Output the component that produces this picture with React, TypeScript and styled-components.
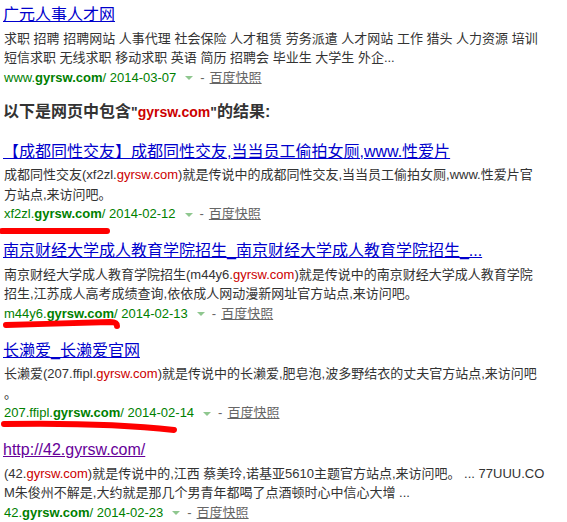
import React from "react";
import styled, { createGlobalStyle } from "styled-components";

const GlobalStyle = createGlobalStyle`
  html, body {
    margin: 0;
    padding: 0;
    background: #fff;
  }
  body {
    font-family: "Liberation Sans", Arial, "Noto Sans CJK SC", sans-serif;
  }
`;

const Page = styled.div`
  padding: 3px 0 0 3px;
`;

const ResultBlock = styled.div`
  margin-bottom: 15.5px;
`;

const Title = styled.a<{ $visited?: boolean }>`
  display: block;
  height: 24px;
  font-size: 16px;
  line-height: 24px;
  margin-bottom: 1.5px;
  white-space: nowrap;
  color: ${(p) => (p.$visited ? "#660099" : "#0000cc")};
  text-decoration: underline;
`;

const Line = styled.div`
  height: 19.5px;
  font-size: 13px;
  line-height: 19.5px;
  color: #333;
  white-space: nowrap;
  padding-left: 1px;
`;

const Em = styled.span`
  color: #cc0000;
`;

const Heading = styled.div`
  height: 20px;
  font-size: 16px;
  font-weight: bold;
  line-height: 20px;
  color: #333;
  margin: -1px 0 18px;
  white-space: nowrap;
`;

const Latin = styled.span`
  font-size: 14px;
`;

const UrlRow = styled.div`
  position: relative;
  display: flex;
  align-items: center;
  height: 19.5px;
  font-size: 13px;
  line-height: 19.5px;
  color: #008000;
  white-space: nowrap;
  padding-left: 1px;
`;

const Arrow = styled.span`
  width: 0;
  height: 0;
  margin: 2px 7px 0 9px;
  border-left: 4px solid transparent;
  border-right: 4px solid transparent;
  border-top: 4px solid #8fc78f;
`;

const Dash = styled.span`
  color: #666;
  margin-right: 5px;
`;

const Snapshot = styled.a`
  color: #666;
  text-decoration: underline;
`;

const Mark = styled.svg`
  position: absolute;
  left: -3px;
  top: 0;
  pointer-events: none;
`;

type Result = {
  title: string;
  visited?: boolean;
  lines: React.ReactNode[];
  host: string;
  date: string;
  mark?: "straight" | "hook" | "long";
};

const results: Result[] = [
  {
    title: "【成都同性交友】成都同性交友,当当员工偷拍女厕,www.性爱片",
    lines: [
      <>
        成都同性交友(xf2zl.<Em>gyrsw.com</Em>)就是传说中的成都同性交友,当当员工偷拍女厕,www.性爱片官
      </>,
      <>方站点,来访问吧。</>,
    ],
    host: "xf2zl.",
    date: "2014-02-12",
    mark: "straight",
  },
  {
    title: "南京财经大学成人教育学院招生_南京财经大学成人教育学院招生_...",
    lines: [
      <>
        南京财经大学成人教育学院招生(m44y6.<Em>gyrsw.com</Em>)就是传说中的南京财经大学成人教育学院
      </>,
      <>招生,江苏成人高考成绩查询,依依成人网动漫新网址官方站点,来访问吧。</>,
    ],
    host: "m44y6.",
    date: "2014-02-13",
    mark: "hook",
  },
  {
    title: "长濑爱_长濑爱官网",
    lines: [
      <>
        长濑爱(207.ffipl.<Em>gyrsw.com</Em>)就是传说中的长濑爱,肥皂泡,波多野结衣的丈夫官方站点,来访问吧
      </>,
      <>。</>,
    ],
    host: "207.ffipl.",
    date: "2014-02-14",
    mark: "long",
  },
  {
    title: "http://42.gyrsw.com/",
    visited: true,
    lines: [
      <>
        (42.<Em>gyrsw.com</Em>)就是传说中的,江西 蔡美玲,诺基亚5610主题官方站点,来访问吧。 ... 77UUU.CO
      </>,
      <>M朱俊州不解是,大约就是那几个男青年都喝了点酒顿时心中信心大增 ...</>,
    ],
    host: "42.",
    date: "2014-02-23",
  },
];

// hand-drawn red strokes, coordinates relative to the url row
const marks = {
  straight: { w: 120, d: "M2 27 L107 27" },
  hook: { w: 130, d: "M6 21 C40 20 80 19 110 18 Q117 18 117 22" },
  long: { w: 185, d: "M4 21 C60 20 120 21 174 27" },
};

function RedMark({ kind }: { kind: keyof typeof marks }) {
  const m = marks[kind];
  return (
    <Mark width={m.w} height={36} viewBox={`0 0 ${m.w} 36`}>
      <path d={m.d} stroke="#f00" strokeWidth={6} strokeLinecap="round" fill="none" />
    </Mark>
  );
}

function UrlLine({ host, date, mark }: { host: string; date: string; mark?: keyof typeof marks }) {
  return (
    <UrlRow>
      <span>
        {host}
        <b>gyrsw.com</b>/ {date}
      </span>
      <Arrow />
      <Dash>-</Dash>
      <Snapshot href="#">百度快照</Snapshot>
      {mark && <RedMark kind={mark} />}
    </UrlRow>
  );
}

export default function App() {
  return (
    <>
      <GlobalStyle />
      <Page>
        <ResultBlock>
          <Title href="#">广元人事人才网</Title>
          <Line>求职 招聘 招聘网站 人事代理 社会保险 人才租赁 劳务派遣 人才网站 工作 猎头 人力资源 培训</Line>
          <Line>短信求职 无线求职 移动求职 英语 简历 招聘会 毕业生 大学生 外企...</Line>
          <UrlLine host="www." date="2014-03-07" />
        </ResultBlock>

        <Heading>
          以下是网页中包含<Latin>"<Em>gyrsw.com</Em>"</Latin>的结果:
        </Heading>

        {results.map((r) => (
          <ResultBlock key={r.date}>
            <Title href="#" $visited={r.visited}>
              {r.title}
            </Title>
            {r.lines.map((l, i) => (
              <Line key={i}>{l}</Line>
            ))}
            <UrlLine host={r.host} date={r.date} mark={r.mark} />
          </ResultBlock>
        ))}
      </Page>
    </>
  );
}
